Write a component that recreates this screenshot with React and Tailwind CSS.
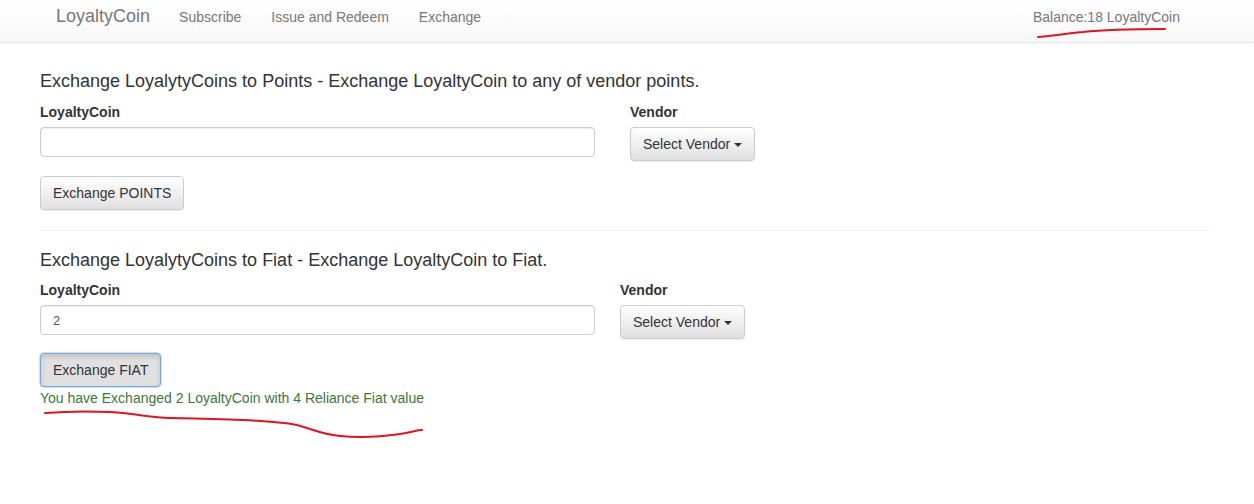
import React from "react";

const btn =
  "h-[34px] px-3 rounded-[4px] border border-[#ccc] bg-gradient-to-b from-white to-[#e0e0e0] text-[14px] text-[#333] shadow-[0_1px_1px_rgba(0,0,0,0.075)] flex items-center";

function VendorSelect({ left }) {
  return (
    <div className={left}>
      <div className="text-[14px] font-bold text-[#333] leading-[20px] h-[20px]">Vendor</div>
      <button className={`${btn} mt-[5px] gap-[4px]`}>
        Select Vendor
        <span className="inline-block w-0 h-0 border-t-[4px] border-t-[#333] border-x-[4px] border-x-transparent mt-[1px]" />
      </button>
    </div>
  );
}

function ExchangeSection({ title, value, vendorLeft, labelGap, rowGap, children }) {
  return (
    <section>
      <h3 className="text-[18px] leading-[20px] text-[#333]">{title}</h3>
      <div className={`flex ${labelGap}`}>
        <div className="w-[555px]">
          <div className="text-[14px] font-bold text-[#333] leading-[20px] h-[20px]">LoyaltyCoin</div>
          <input
            defaultValue={value}
            className="mt-[5px] w-full h-[30px] px-3 border border-[#ccc] rounded-[4px] text-[13px] text-[#555] shadow-[inset_0_1px_1px_rgba(0,0,0,0.075)] outline-none"
          />
        </div>
        <VendorSelect left={vendorLeft} />
      </div>
      <div className={rowGap}>{children}</div>
    </section>
  );
}

export default function App() {
  return (
    <div className="relative w-[1254px] h-[504px] bg-white overflow-hidden font-['Liberation_Sans',Arial,sans-serif]">
      <nav className="h-[43px] border-b border-[#e7e7e7] bg-gradient-to-b from-white to-[#f8f8f8] shadow-[0_1px_3px_rgba(0,0,0,0.04)] flex items-start pt-[6px] text-[#777]">
        <span className="ml-[56px] text-[18px] leading-[20px]">LoyaltyCoin</span>
        <a className="ml-[29px] text-[14px] leading-[20px] mt-[1px]">Subscribe</a>
        <a className="ml-[30px] text-[14px] leading-[20px] mt-[1px]">Issue and Redeem</a>
        <a className="ml-[30px] text-[14px] leading-[20px] mt-[1px]">Exchange</a>
        <span className="ml-auto mr-[74px] text-[14px] leading-[20px] mt-[1px]">Balance:18 LoyaltyCoin</span>
      </nav>

      <main className="px-[40px] pt-[28px]">
        <ExchangeSection
          title="Exchange LoyalytyCoins to Points - Exchange LoyaltyCoin to any of vendor points."
          value=""
          vendorLeft="ml-[35px]"
          labelGap="mt-[11px]"
          rowGap="mt-[15px]"
        >
          <button className={`${btn} h-[33px]`}>Exchange POINTS</button>
        </ExchangeSection>

        <hr className="mt-[20px] w-[1170px] border-t border-[#eee]" />

        <div className="mt-[19px]">
          <ExchangeSection
            title="Exchange LoyalytyCoins to Fiat - Exchange LoyaltyCoin to Fiat."
            value="2"
            vendorLeft="ml-[25px]"
            labelGap="mt-[10px]"
            rowGap="mt-[14px]"
          >
            <button className="h-[34px] px-3 rounded-[4px] border border-[#7ea6d6] bg-[#e0e0e0] text-[14px] text-[#333] shadow-[inset_0_3px_5px_rgba(0,0,0,0.125),0_0_0_1px_rgba(102,175,233,0.35)] flex items-center">
              Exchange FIAT
            </button>
            <p className="mt-[1px] text-[14px] leading-[20px] text-[#3c763d]">
              You have Exchanged 2 LoyaltyCoin with 4 Reliance Fiat value
            </p>
          </ExchangeSection>
        </div>
      </main>

      <svg className="absolute inset-0 pointer-events-none" width="1254" height="504">
        <path
          d="M1038 37 C1060 35 1070 33 1083 32 C1110 29 1140 29 1165 29"
          fill="none"
          stroke="#e0141e"
          strokeWidth="2"
          strokeLinecap="round"
        />
        <path
          d="M45 413 C70 411 90 411 110 412 C140 414 150 418 170 418 C220 419 270 420 297 425 C312 429 320 434 340 436 C360 438 380 437 400 434 C412 432 418 430 422 430"
          fill="none"
          stroke="#e0141e"
          strokeWidth="2"
          strokeLinecap="round"
        />
      </svg>
    </div>
  );
}
